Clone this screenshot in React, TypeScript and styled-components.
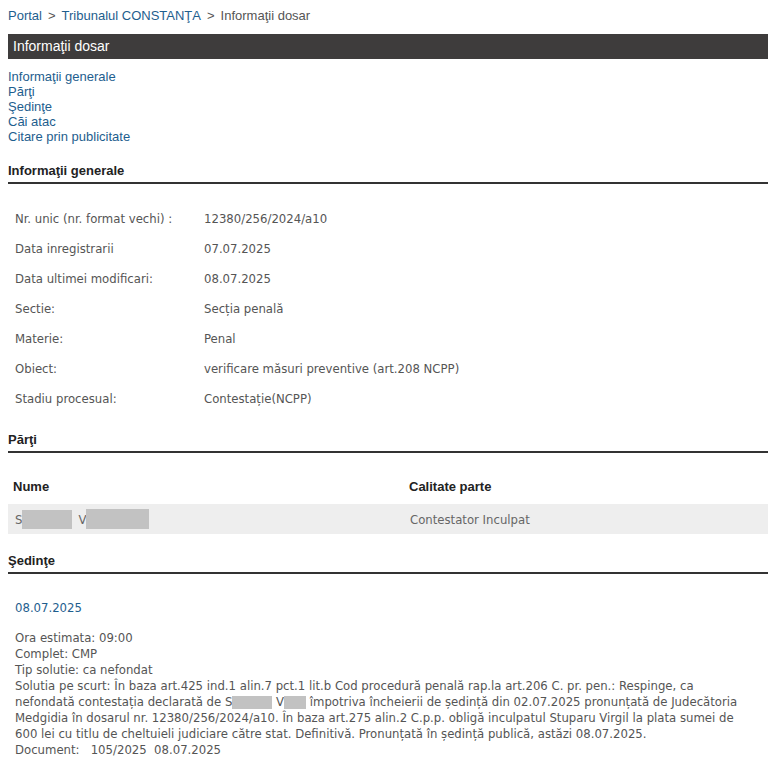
import React from "react";
import styled, { createGlobalStyle } from "styled-components";

const GlobalStyle = createGlobalStyle`
    body {
        margin: 8px;
        background: #fff;
        font-family: "Liberation Sans", Arial, sans-serif;
    }
`;

const Page = styled.div`
    width: 760px;
`;

const Breadcrumb = styled.div`
    font-size: 13px;
    line-height: 16px;
    color: #555;
`;

const Crumb = styled.a`
    color: #1e5e8e;
    text-decoration: none;
`;

const Sep = styled.span`
    color: #555;
    margin: 0 6px;
`;

const TitleBar = styled.div`
    margin-top: 10px;
    height: 25px;
    background: #3e3c3c;
    color: #fff;
    font-size: 14px;
    line-height: 25px;
    padding-left: 5px;
`;

const LinkList = styled.div`
    margin-top: 10px;
    display: flex;
    flex-direction: column;
    align-items: flex-start;
`;

const NavLink = styled.a`
    color: #1e5e8e;
    font-size: 13px;
    line-height: 15px;
    text-decoration: none;
`;

const SectionTitle = styled.div<{ $top: number }>`
    margin-top: ${(p) => p.$top}px;
    font-size: 13px;
    font-weight: bold;
    color: #222;
    line-height: 15px;
    padding-bottom: 4px;
    border-bottom: 2px solid #333;
`;

const InfoGrid = styled.div`
    margin-top: 20px;
    display: grid;
    grid-template-columns: 189px 1fr;
    padding-left: 7px;
    font-family: "DejaVu Sans Condensed", "DejaVu Sans", sans-serif;
    font-size: 13px;
    color: #555;
`;

const Cell = styled.div`
    height: 30px;
    line-height: 30px;
`;

const PartsHead = styled.div`
    box-sizing: border-box;
    margin-top: 20px;
    display: grid;
    grid-template-columns: 396px 1fr;
    height: 31px;
    padding: 0 0 4px 5px;
    align-items: center;
    font-size: 13px;
    font-weight: bold;
    color: #222;
`;

const PartsRow = styled.div`
    display: grid;
    grid-template-columns: 395px 1fr;
    height: 30px;
    align-items: center;
    padding-left: 7px;
    background: #eee;
    font-family: "DejaVu Sans Condensed", "DejaVu Sans", sans-serif;
    font-size: 13px;
    color: #666;
`;

const Name = styled.div`
    display: flex;
    align-items: center;
`;

const Initial = styled.span`
    margin-left: 6px;
`;

const Redacted = styled.span<{ $w: number; $h: number }>`
    display: inline-block;
    width: ${(p) => p.$w}px;
    height: ${(p) => p.$h}px;
    background: #c2c2c2;
    vertical-align: middle;
`;

const Hearing = styled.div`
    padding-left: 7px;
    font-family: "DejaVu Sans Condensed", "DejaVu Sans", sans-serif;
    font-size: 13px;
    color: #555;
`;

const HearingDate = styled.div`
    margin-top: 26px;
    color: #1e5e8e;
    line-height: 16px;
`;

const HearingText = styled.div`
    margin-top: 14px;
    line-height: 16px;
`;

const Line = styled.div`
    white-space: nowrap;
`;

const info: [string, string][] = [
    ["Nr. unic (nr. format vechi) :", "12380/256/2024/a10"],
    ["Data inregistrarii", "07.07.2025"],
    ["Data ultimei modificari:", "08.07.2025"],
    ["Sectie:", "Secția penală"],
    ["Materie:", "Penal"],
    ["Obiect:", "verificare măsuri preventive (art.208 NCPP)"],
    ["Stadiu procesual:", "Contestație(NCPP)"],
];

const links = [
    "Informaţii generale",
    "Părţi",
    "Şedinţe",
    "Căi atac",
    "Citare prin publicitate",
];

const App: React.FC = () => {
    return (
        <Page>
            <GlobalStyle />
            <Breadcrumb>
                <Crumb href="#">Portal</Crumb>
                <Sep>&gt;</Sep>
                <Crumb href="#">Tribunalul CONSTANŢA</Crumb>
                <Sep>&gt;</Sep>
                Informaţii dosar
            </Breadcrumb>
            <TitleBar>Informaţii dosar</TitleBar>
            <LinkList>
                {links.map((l) => (
                    <NavLink key={l} href="#">
                        {l}
                    </NavLink>
                ))}
            </LinkList>

            <SectionTitle $top={19}>Informaţii generale</SectionTitle>
            <InfoGrid>
                {info.map(([k, v]) => (
                    <React.Fragment key={k}>
                        <Cell>{k}</Cell>
                        <Cell>{v}</Cell>
                    </React.Fragment>
                ))}
            </InfoGrid>

            <SectionTitle $top={18}>Părţi</SectionTitle>
            <PartsHead>
                <div>Nume</div>
                <div>Calitate parte</div>
            </PartsHead>
            <PartsRow>
                <Name>
                    S<Redacted $w={50} $h={19} />
                    <Initial>V</Initial>
                    <Redacted $w={63} $h={20} />
                </Name>
                <div>Contestator Inculpat</div>
            </PartsRow>

            <SectionTitle $top={19}>Şedinţe</SectionTitle>
            <Hearing>
                <HearingDate>08.07.2025</HearingDate>
                <HearingText>
                    <Line>Ora estimata: 09:00</Line>
                    <Line>Complet: CMP</Line>
                    <Line>Tip solutie: ca nefondat</Line>
                    <Line>
                        Solutia pe scurt: În baza art.425 ind.1 alin.7 pct.1 lit.b Cod procedură penală
                        rap.la art.206 C. pr. pen.: Respinge, ca
                    </Line>
                    <Line>
                        nefondată contestația declarată de S<Redacted $w={40} $h={13} /> V
                        <Redacted $w={22} $h={13} /> împotriva încheierii de ședință din 02.07.2025
                        pronunțată de Judecătoria
                    </Line>
                    <Line>
                        Medgidia în dosarul nr. 12380/256/2024/a10. În baza art.275 alin.2 C.p.p. obligă
                        inculpatul Stuparu Virgil la plata sumei de
                    </Line>
                    <Line>
                        600 lei cu titlu de cheltuieli judiciare către stat. Definitivă. Pronunțată în
                        ședință publică, astăzi 08.07.2025.
                    </Line>
                    <Line>Document:&nbsp;&nbsp;&nbsp;105/2025&nbsp;&nbsp;08.07.2025</Line>
                </HearingText>
            </Hearing>
        </Page>
    );
};

export default App;
